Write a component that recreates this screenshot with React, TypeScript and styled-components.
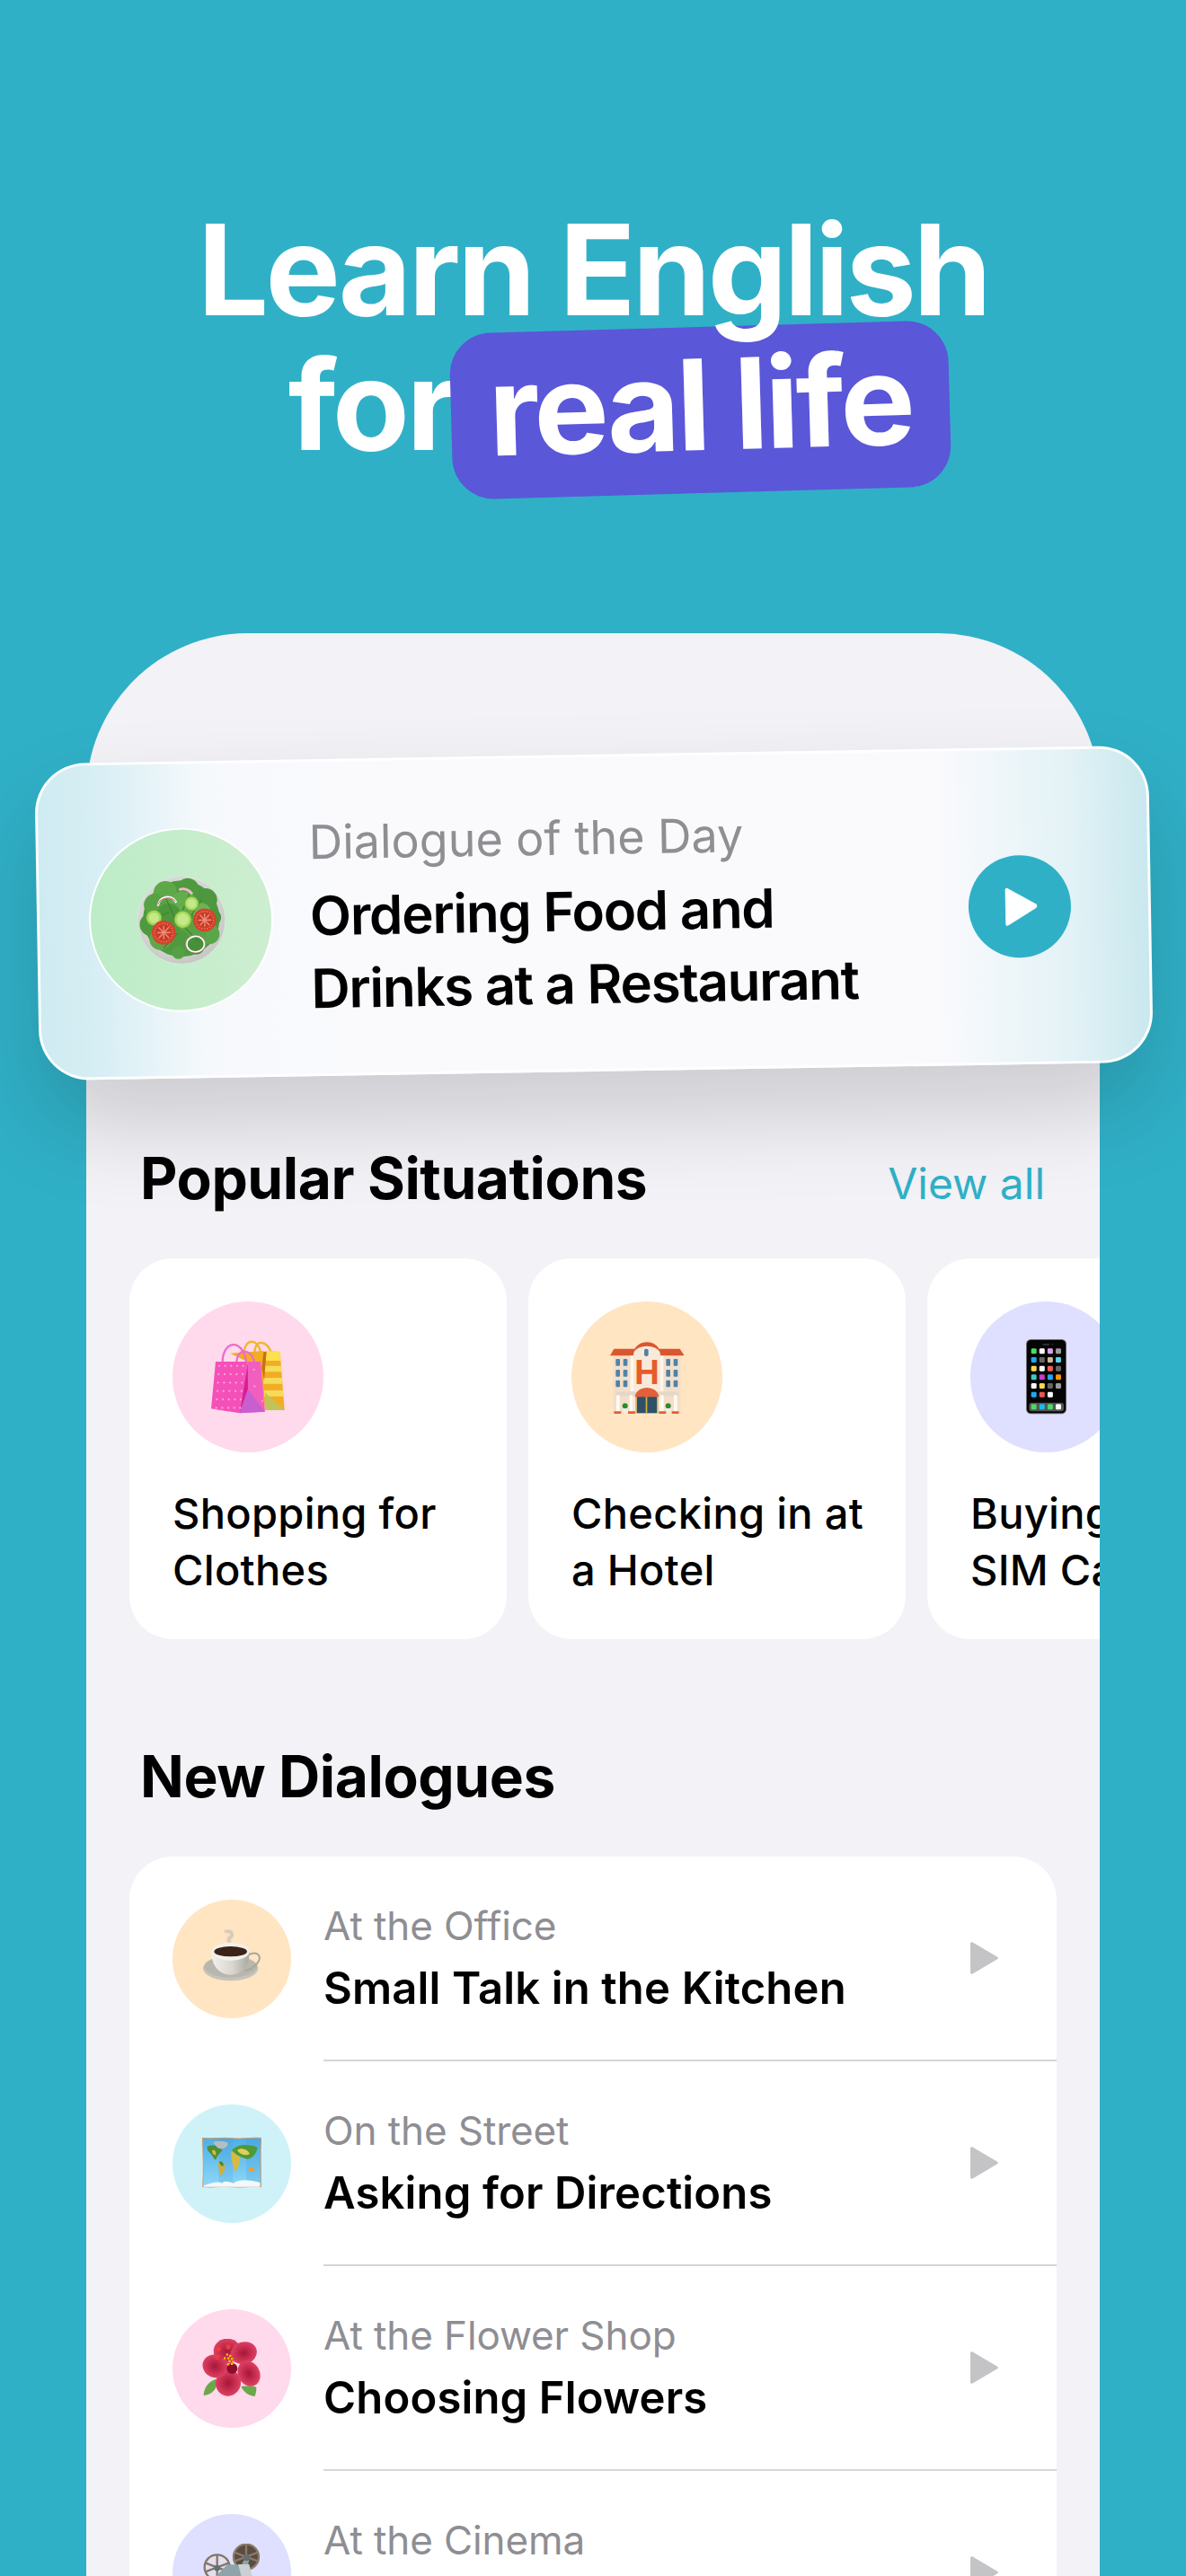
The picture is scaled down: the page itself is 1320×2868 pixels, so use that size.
import React from "react";
import styled, { createGlobalStyle } from "styled-components";

const Global = createGlobalStyle`
  html, body { margin: 0; padding: 0; background: #30b0c7; }
  * { box-sizing: border-box; }
`;

const Page = styled.div`
  width: 1320px;
  height: 2868px;
  overflow: hidden;
  background: #30b0c7;
  font-family: Inter, "Liberation Sans", sans-serif;
  -webkit-font-smoothing: antialiased;
`;

const Headline = styled.h1`
  margin: 0;
  padding-top: 225px;
  color: #fff;
  font-size: 140px;
  font-weight: 700;
  line-height: 150px;
  letter-spacing: -3.5px;
  text-align: center;
`;

const HeadTop = styled.span`
  display: block;
  position: relative;
  z-index: 2;
`;

const HeadBottom = styled.span`
  display: flex;
  justify-content: center;
  align-items: baseline;
  padding-left: 58px;
  height: 150px;
`;

const Pill = styled.span`
  display: inline-block;
  margin: -11px 0 -24px -4px;
  padding: 11px 42px 24px;
  background: #5a57d9;
  border-radius: 46px;
  transform: rotate(-1.6deg);
`;

const Phone = styled.main`
  margin: 180px 96px 0;
  padding-top: 135px;
  height: 2200px;
  background: #f2f2f7;
  border-radius: 180px 180px 0 0;
`;

const DayCard = styled.section`
  position: relative;
  z-index: 3;
  display: flex;
  align-items: center;
  height: 353px;
  margin: 0 -57px 0 -55px;
  padding: 0 86px 0 57px;
  border-radius: 56px;
  border: 3px solid rgba(255, 255, 255, 0.92);
  background: linear-gradient(90deg, #cfebf2 0, #d6eef4 5%, #f6f9fc 15%, #fafafd 28%, #fafafd 81%, #e3f2f6 93%, #c9e8ee 100%);
  box-shadow: 0 50px 100px rgba(0, 0, 0, 0.16);
  transform: rotate(-0.95deg);
`;

const Disc = styled.div<{ $size: number; $bg: string; $ring?: boolean }>`
  flex: none;
  display: flex;
  align-items: center;
  justify-content: center;
  width: ${(p) => p.$size}px;
  height: ${(p) => p.$size}px;
  border-radius: 50%;
  background: ${(p) => p.$bg};
  ${(p) => (p.$ring ? "box-shadow: 0 0 0 2px #fff;" : "")}
`;

const DayText = styled.div`
  flex: 1;
  margin-left: 43px;
  padding-top: 5px;
`;

const DayKicker = styled.div`
  color: #8e8e93;
  font-size: 52px;
  line-height: 62px;
`;

const DayTitle = styled.div`
  margin-top: 10px;
  color: #000;
  font-size: 60px;
  font-weight: 600;
  line-height: 81px;
  letter-spacing: -1.3px;
`;

const PlayDisc = styled.div`
  flex: none;
  display: flex;
  align-items: center;
  justify-content: center;
  width: 114px;
  height: 114px;
  border-radius: 50%;
  background: #30b0c7;
`;

const SectionHead = styled.div`
  display: flex;
  align-items: baseline;
  justify-content: space-between;
  margin-top: 80px;
  padding: 0 61px 0 60px;
`;

const SectionTitle = styled.h2`
  margin: 0;
  color: #000;
  font-size: 64px;
  font-weight: 700;
  line-height: 78px;
  letter-spacing: -0.4px;
`;

const ViewAll = styled.a`
  color: #30b0c7;
  font-size: 48px;
  line-height: 60px;
`;

const Rail = styled.div`
  display: flex;
  gap: 24px;
  margin-top: 50px;
  padding: 0 0 0 48px;
  overflow: hidden;
`;

const RailCard = styled.article`
  flex: none;
  width: 420px;
  height: 424px;
  padding: 48px 20px 0 48px;
  background: #fff;
  border-radius: 48px;
`;

const RailLabel = styled.div`
  margin-top: 36px;
  color: #000;
  font-size: 47px;
  font-weight: 500;
  line-height: 63px;
  letter-spacing: 0.3px;
  white-space: nowrap;
`;

const SecondHead = styled(SectionHead)`
  margin-top: 114px;
`;

const List = styled.section`
  margin: 50px 48px 0;
  background: #fff;
  border-radius: 48px 48px 0 0;
`;

const Row = styled.div`
  display: flex;
  align-items: center;
  height: 228px;
  padding-left: 48px;
`;

const RowBody = styled.div`
  flex: 1;
  display: flex;
  align-items: center;
  justify-content: space-between;
  height: 228px;
  margin-left: 36px;
  padding-right: 63px;
  border-bottom: 2px solid #d6d6d8;
`;

const RowKicker = styled.div`
  color: #8e8e93;
  font-size: 44px;
  line-height: 53px;
  letter-spacing: -0.1px;
`;

const RowTitle = styled.div`
  margin-top: 14px;
  color: #000;
  font-size: 49px;
  font-weight: 600;
  line-height: 58px;
  letter-spacing: 0.15px;
`;

const Art = styled.svg<{ $size: number }>`
  display: block;
  flex: none;
  width: ${(p) => p.$size}px;
  height: ${(p) => p.$size}px;
`;

const Salad = () => {
  const leaves = [
    [130, 85, 40, "#5fa84a"], [205, 75, 38, "#4f9a3f"], [265, 110, 38, "#4d983e"], [95, 125, 38, "#58a245"],
    [80, 190, 38, "#4f9a3f"], [285, 170, 30, "#4a943a"], [275, 225, 34, "#5aa648"], [190, 125, 45, "#62ad4d"],
    [140, 160, 40, "#4c963c"], [220, 215, 45, "#58a245"], [170, 250, 40, "#4f9a3f"], [110, 240, 36, "#5fa84a"],
    [230, 265, 28, "#479038"], [170, 285, 22, "#54a042"], [250, 150, 30, "#6ab455"],
  ] as const;
  return (
    <Art $size={98} viewBox="35 30 295 295">
      <defs>
        <radialGradient id="plate" cx="0.45" cy="0.4" r="0.6">
          <stop offset="0.7" stopColor="#d6d8d4" />
          <stop offset="1" stopColor="#c5c7c3" />
        </radialGradient>
      </defs>
      <circle cx="182" cy="177" r="147" fill="url(#plate)" stroke="#e8eae6" strokeWidth="2" />
      <circle cx="182" cy="172" r="128" fill="#4f9a3f" />
      {leaves.map(([x, y, r, c], i) => (
        <circle key={i} cx={x} cy={y} r={r} fill={c} />
      ))}
      <path d="M130 100 L160 170 M210 90 L180 160 M90 170 L140 150 M250 110 L210 170 M240 250 L190 200 M120 270 L170 220" stroke="#3f8530" strokeWidth="4" fill="none" />
      <path d="M104 128 C110 95 150 88 166 118" fill="none" stroke="#fff" strokeWidth="7" />
      <path d="M104 124 C112 100 148 94 163 114" fill="none" stroke="#d1618a" strokeWidth="3" />
      <path d="M176 76 C190 68 208 74 220 90" fill="none" stroke="#f2b8cd" strokeWidth="8" />
      <circle cx="90" cy="168" r="26" fill="#a7d95c" stroke="#6aa83a" strokeWidth="3" />
      <circle cx="90" cy="168" r="17" fill="#c5e88a" />
      <circle cx="187" cy="175" r="29" fill="#a7d95c" stroke="#6aa83a" strokeWidth="3" />
      <circle cx="187" cy="175" r="20" fill="#c5e88a" />
      <circle cx="217" cy="122" r="24" fill="#a7d95c" stroke="#6aa83a" strokeWidth="3" />
      <circle cx="217" cy="122" r="16" fill="#c5e88a" />
      <circle cx="122" cy="218" r="40" fill="#d9412f" />
      <circle cx="122" cy="218" r="30" fill="#c93a2a" stroke="#e39a50" strokeWidth="4" strokeDasharray="3 6" />
      <path d="M122 195 V240 M100 218 H145 M105 200 L140 236 M140 200 L105 236" stroke="#ee8f77" strokeWidth="4" />
      <circle cx="260" cy="178" r="39" fill="#d9412f" />
      <circle cx="260" cy="178" r="29" fill="#c93a2a" stroke="#e39a50" strokeWidth="4" strokeDasharray="3 6" />
      <path d="M260 156 V200 M238 178 H282 M244 160 L276 196 M276 160 L244 196" stroke="#ee8f77" strokeWidth="4" />
      <ellipse cx="228" cy="258" rx="30" ry="27" fill="none" stroke="#fff" strokeWidth="6" />
      <ellipse cx="228" cy="258" rx="33" ry="30" fill="none" stroke="#d1618a" strokeWidth="2" />
    </Art>
  );
};

const Bags = () => {
  const dots: [number, number][] = [];
  for (let r = 0; r < 6; r++) for (let c = 0; c < 5; c++) dots.push([342 + c * 20 - r * 2, 392 + r * 28]);
  return (
    <Art $size={82} viewBox="315 306 246 246">
      <path d="M425 345 C430 300 470 300 480 345 M460 345 C465 300 500 310 515 345" fill="none" stroke="#f3b52b" strokeWidth="7" />
      <polygon points="378,350 490,342 545,345 560,540 495,540 480,400" fill="#f2ad24" />
      <polygon points="490,342 545,345 548,375 490,375" fill="#fbe04f" />
      <polygon points="488,392 550,392 552,412 488,412" fill="#f5dc5a" />
      <polygon points="490,432 552,432 554,452 490,452" fill="#f5dc5a" />
      <polygon points="492,474 556,474 557,494 492,494" fill="#f5dc5a" />
      <polygon points="490,345 500,345 492,440 484,400" fill="#c8730f" />
      <polygon points="495,482 560,540 495,540" fill="#c0c458" />
      <path d="M353 378 C355 305 420 300 432 378 M400 378 C405 330 445 335 460 378" fill="none" stroke="#ee6bc7" strokeWidth="7" />
      <polygon points="437,378 480,378 495,545 410,550" fill="#f25ec0" />
      <polygon points="330,378 437,378 410,550 315,535" fill="#f54fb8" />
      <polygon points="437,385 438,475 410,550" fill="#d81f90" />
      <polygon points="437,470 495,545 410,550" fill="#c95ecf" />
      {dots.map(([x, y], i) => (
        <circle key={i} cx={x} cy={y} r="3.5" fill="#fa9ddb" />
      ))}
      <circle cx="458" cy="405" r="3.5" fill="#fa9ddb" />
      <circle cx="460" cy="460" r="3.5" fill="#fa9ddb" />
      <circle cx="486" cy="510" r="3.5" fill="#fa9ddb" />
    </Art>
  );
};

const Hotel = () => (
  <Art $size={82} viewBox="237 306 246 246">
    <rect x="247" y="358" width="226" height="192" fill="#f3dfc9" />
    <polygon points="237,358 250,335 320,335 320,358" fill="#d9572f" />
    <polygon points="400,335 470,335 485,358 400,358" fill="#d9572f" />
    <path d="M315 550 V355 C318 300 402 300 405 355 V550 Z" fill="#f9e9d8" />
    <path d="M315 350 C320 300 400 300 405 350 C395 318 325 318 315 350 Z" fill="#d9572f" />
    <rect x="305" y="358" width="10" height="120" fill="#fff6ec" />
    <rect x="405" y="358" width="10" height="120" fill="#fff6ec" />
    <rect x="351" y="335" width="14" height="25" rx="6" fill="#4f83a8" />
    {[369, 405, 440].map((y) =>
      [256, 281, 424, 449].map((x) => <rect key={`${x}-${y}`} x={x} y={y} width="14" height="23" rx="3" fill="#4f83a8" />)
    )}
    <text x="360" y="452" textAnchor="middle" fontFamily="Liberation Sans, sans-serif" fontWeight="700" fontSize="116" fill="#e55c2e">H</text>
    <rect x="255" y="478" width="210" height="16" fill="#e6d8c6" />
    {[258, 302, 405, 450].map((x) => (
      <rect key={x} x={x} y="490" width="11" height="58" fill="#fffaf2" />
    ))}
    <rect x="326" y="495" width="68" height="55" fill="#2f5166" />
    <rect x="356" y="495" width="5" height="55" fill="#d7ae4c" />
    <rect x="322" y="495" width="4" height="55" fill="#d7ae4c" />
    <rect x="394" y="495" width="4" height="55" fill="#d7ae4c" />
    <path d="M320 496 C325 455 395 455 400 496 Z" fill="#e2603a" />
    {[287, 431].map((x) => (
      <g key={x}>
        <circle cx={x} cy="526" r="9" fill="#2b8a2b" />
        <rect x={x - 8} y="534" width="16" height="16" fill="#f2ece2" />
      </g>
    ))}
    {[250, 297, 400, 443].map((x) => (
      <rect key={x} x={x} y="544" width="24" height="8" rx="2" fill="#dd5f36" />
    ))}
  </Art>
);

const PHONE_ROWS = [
  ["#4cd964", "#fff", "#e0a0e4", "#9a9a9a"],
  ["#1fa8f5", "#666", "#d0b898", "#58d4ec"],
  ["#ffd84d", "#fff", "#f06058", "#666"],
  ["#3cc8c8", "#c83ec8", "#1fa8f5", "#ff9500"],
  ["#fff", "#ffd84d", "#666", "#9a9a9a"],
  ["#1fa8f5", "#e8584f", "#fff"],
];

const Handset = () => (
  <Art $size={84} viewBox="275 273 252 252">
    <rect x="335" y="273" width="135" height="250" rx="16" fill="#6c6c6c" />
    <rect x="338" y="276" width="129" height="244" rx="13" fill="#050505" />
    <rect x="390" y="288" width="24" height="5" rx="2.5" fill="#333" />
    <circle cx="423" cy="290" r="2.5" fill="#333" />
    {PHONE_ROWS.map((row, r) =>
      row.map((c, i) => <rect key={`${r}-${i}`} x={352 + i * 27.3} y={304 + r * 29} width="18" height="18" rx="4" fill={c} />)
    )}
    <rect x="345" y="485" width="116" height="29" rx="9" fill="#555" />
    {["#4cd964", "#1fb8f0", "#4cd964", "#fff"].map((c, i) => (
      <rect key={i} x={352 + i * 27.3} y="490" width="18" height="18" rx="4" fill={c} />
    ))}
  </Art>
);

const Coffee = () => (
  <Art $size={66} viewBox="285 323 198 198">
    <defs>
      <linearGradient id="cup" x1="0" y1="0" x2="1" y2="0">
        <stop offset="0" stopColor="#f3f1ec" />
        <stop offset="0.55" stopColor="#d9d6cf" />
        <stop offset="1" stopColor="#aaa79f" />
      </linearGradient>
      <filter id="steam"><feGaussianBlur stdDeviation="3" /></filter>
    </defs>
    <path d="M360 330 C385 325 395 345 378 350 C365 355 385 365 370 372" fill="none" stroke="#c9c3b8" strokeWidth="9" filter="url(#steam)" />
    <ellipse cx="380" cy="453" rx="92" ry="42" fill="#c6c3ba" />
    <ellipse cx="380" cy="448" rx="88" ry="36" fill="#b9b6ad" />
    <path d="M440 408 C472 392 488 415 466 440 C455 453 437 460 428 462" fill="none" stroke="#a9a69d" strokeWidth="6" />
    <path d="M316 398 C316 448 345 475 380 475 C415 475 443 448 443 398 Z" fill="url(#cup)" />
    <ellipse cx="380" cy="397" rx="63" ry="30" fill="#f2f0ea" />
    <ellipse cx="380" cy="397" rx="55" ry="17" fill="#3c2217" />
  </Art>
);

const WorldMap = () => (
  <Art $size={66} viewBox="285 1008 198 198">
    <defs>
      <linearGradient id="sea" x1="0" y1="0" x2="0" y2="1">
        <stop offset="0" stopColor="#4eaee6" />
        <stop offset="1" stopColor="#8fd8f8" />
      </linearGradient>
    </defs>
    <path d="M286 1021 C320 1025 350 1018 384 1022 C420 1026 450 1018 482 1021 C478 1070 482 1130 481 1184 C450 1180 420 1188 384 1184 C350 1180 320 1188 287 1184 C291 1130 288 1070 286 1021 Z" fill="url(#sea)" stroke="#cf9a68" strokeWidth="3" />
    <polygon points="340,1023 388,1023 388,1184 340,1184" fill="#2f8fd0" opacity="0.16" />
    <polygon points="432,1023 480,1023 480,1184 432,1184" fill="#2f8fd0" opacity="0.16" />
    <path d="M302 1050 C320 1040 345 1048 352 1062 C345 1072 335 1078 332 1092 C326 1098 322 1082 312 1072 C306 1066 300 1060 302 1050 Z" fill="#4f8f35" />
    <path d="M318 1062 C326 1058 334 1066 330 1078 C324 1080 318 1072 318 1062 Z" fill="#d5b84a" />
    <path d="M340 1100 C352 1098 366 1108 360 1126 C356 1138 350 1146 348 1150 C344 1135 336 1118 340 1100 Z" fill="#cfae3e" />
    <path d="M342 1100 C350 1098 358 1104 356 1114 C350 1116 344 1110 342 1100 Z" fill="#3f8a33" />
    <path d="M322 1034 C340 1030 365 1030 372 1040 C365 1058 345 1060 335 1052 C330 1046 324 1040 322 1034 Z" fill="#b8bcc0" />
    <path d="M382 1068 C395 1058 410 1066 412 1080 C414 1098 405 1125 395 1134 C388 1118 380 1090 382 1068 Z" fill="#d6b947" />
    <path d="M384 1062 C402 1040 440 1040 470 1052 C468 1070 452 1090 436 1092 C420 1086 400 1082 384 1062 Z" fill="#4e9a36" />
    <path d="M402 1062 C416 1052 436 1058 444 1074 C432 1082 412 1078 402 1062 Z" fill="#e3cc5a" />
    <ellipse cx="450" cy="1127" rx="10" ry="7" fill="#f09c30" />
    <path d="M290 1180 C320 1170 340 1165 352 1172 C360 1160 378 1170 390 1172 C410 1158 440 1160 478 1170 L478 1184 L290 1184 Z" fill="#f4f8fb" />
  </Art>
);

const Flower = () => (
  <Art $size={66} viewBox="285 431 198 198">
    <defs>
      <radialGradient id="petal" cx="0.5" cy="0.5" r="0.6">
        <stop offset="0" stopColor="#a81638" />
        <stop offset="1" stopColor="#e8496c" />
      </radialGradient>
    </defs>
    <path d="M330 565 C305 575 290 595 290 620 C315 618 335 600 335 575 Z" fill="#6aa84a" />
    <path d="M415 590 C430 588 455 588 466 592 C466 610 462 620 460 623 C440 620 422 608 415 590 Z" fill="#6aa84a" />
    <ellipse cx="369" cy="472" rx="46" ry="42" fill="url(#petal)" />
    <ellipse cx="424" cy="478" rx="44" ry="37" transform="rotate(-15 424 478)" fill="url(#petal)" />
    <ellipse cx="441" cy="547" rx="36" ry="44" transform="rotate(-28 441 547)" fill="url(#petal)" />
    <ellipse cx="372" cy="578" rx="42" ry="44" transform="rotate(20 372 578)" fill="url(#petal)" />
    <ellipse cx="328" cy="522" rx="42" ry="38" transform="rotate(20 328 522)" fill="url(#petal)" />
    <circle cx="385" cy="530" r="18" fill="#8a0f2c" />
    <path d="M340 465 L372 495 M372 458 L372 495 M335 492 L370 497" stroke="#b5203f" strokeWidth="3" />
    <circle cx="340" cy="465" r="8" fill="#ef3b3b" />
    <circle cx="372" cy="458" r="8" fill="#ef3b3b" />
    <circle cx="335" cy="492" r="8" fill="#ef3b3b" />
    {[[368, 483], [378, 487], [360, 495], [372, 495], [384, 497], [376, 505], [388, 507], [372, 515], [384, 514]].map(([x, y], i) => (
      <rect key={i} x={x - 3} y={y - 3} width="7" height="7" fill="#f2c200" />
    ))}
  </Art>
);

const Projector = () => (
  <Art $size={66} viewBox="105 126 198 198">
    <circle cx="252" cy="170" r="42" fill="#5a4c3e" stroke="#8a7a6a" strokeWidth="7" />
    <path d="M252 128 V212 M212 155 L292 185 M212 185 L292 155" stroke="#8a7a6a" strokeWidth="7" />
    <circle cx="155" cy="205" r="42" fill="#e2dfee" stroke="#85766a" strokeWidth="7" />
    <path d="M155 163 V247 M115 190 L195 220 M115 220 L195 190" stroke="#85766a" strokeWidth="7" />
    <path d="M145 240 L190 195 L235 198 L250 172 L262 180 L248 240 L230 324 L145 324 Z" fill="#8ea3aa" />
    <path d="M225 195 L262 195 L275 250 L240 250 Z" fill="#c8d0d2" />
    <rect x="240" y="248" width="36" height="30" fill="#e8ecec" />
    <circle cx="155" cy="208" r="10" fill="#5f6f75" />
    <circle cx="253" cy="173" r="10" fill="#5f6f75" />
  </Art>
);

const BigPlay = () => (
  <Art $size={44} viewBox="0 0 44 44">
    <path d="M6 3.5 C6 1.6 7.6 0.8 9.2 1.8 L40 19.4 C41.8 20.6 41.8 23 40 24.2 L9.2 43 C7.6 44 6 43 6 41 Z" fill="#fff" />
  </Art>
);

const SmallPlay = () => (
  <Art $size={36} viewBox="0 0 36 36">
    <path d="M3 2 C3 0.6 4.2 -0.2 5.6 0.4 L32.6 16.4 C34.4 17.4 34.4 18.6 32.6 19.6 L5.6 35.6 C4.2 36.2 3 35.4 3 34 Z" fill="#c4c4c6" />
  </Art>
);

const situations = [
  { bg: "#ffd9ec", art: <Bags />, label: ["Shopping for", "Clothes"] },
  { bg: "#ffe5c2", art: <Hotel />, label: ["Checking in at", "a Hotel"] },
  { bg: "#dfdfff", art: <Handset />, label: ["Buying a", "SIM Card"] },
];

const dialogues = [
  { bg: "#ffe5c2", art: <Coffee />, place: "At the Office", title: "Small Talk in the Kitchen" },
  { bg: "#cff2f9", art: <WorldMap />, place: "On the Street", title: "Asking for Directions" },
  { bg: "#ffd9ec", art: <Flower />, place: "At the Flower Shop", title: "Choosing Flowers" },
  { bg: "#dfdfff", art: <Projector />, place: "At the Cinema", title: "Buying Tickets" },
];

export default function App() {
  return (
    <Page>
      <Global />
      <Headline>
        <HeadTop>Learn English</HeadTop>
        <HeadBottom>
          for<Pill>real life</Pill>
        </HeadBottom>
      </Headline>
      <Phone>
        <DayCard>
          <Disc $size={201} $bg="linear-gradient(90deg, #bdecc8, #cdeed0)" $ring>
            <Salad />
          </Disc>
          <DayText>
            <DayKicker>Dialogue of the Day</DayKicker>
            <DayTitle>
              Ordering Food and
              <br />
              Drinks at a Restaurant
            </DayTitle>
          </DayText>
          <PlayDisc>
            <BigPlay />
          </PlayDisc>
        </DayCard>
        <SectionHead>
          <SectionTitle>Popular Situations</SectionTitle>
          <ViewAll>View all</ViewAll>
        </SectionHead>
        <Rail>
          {situations.map((s) => (
            <RailCard key={s.label[0]}>
              <Disc $size={168} $bg={s.bg}>
                {s.art}
              </Disc>
              <RailLabel>
                {s.label[0]}
                <br />
                {s.label[1]}
              </RailLabel>
            </RailCard>
          ))}
        </Rail>
        <SecondHead>
          <SectionTitle>New Dialogues</SectionTitle>
        </SecondHead>
        <List>
          {dialogues.map((d) => (
            <Row key={d.title}>
              <Disc $size={132} $bg={d.bg}>
                {d.art}
              </Disc>
              <RowBody>
                <div>
                  <RowKicker>{d.place}</RowKicker>
                  <RowTitle>{d.title}</RowTitle>
                </div>
                <SmallPlay />
              </RowBody>
            </Row>
          ))}
        </List>
      </Phone>
    </Page>
  );
}
